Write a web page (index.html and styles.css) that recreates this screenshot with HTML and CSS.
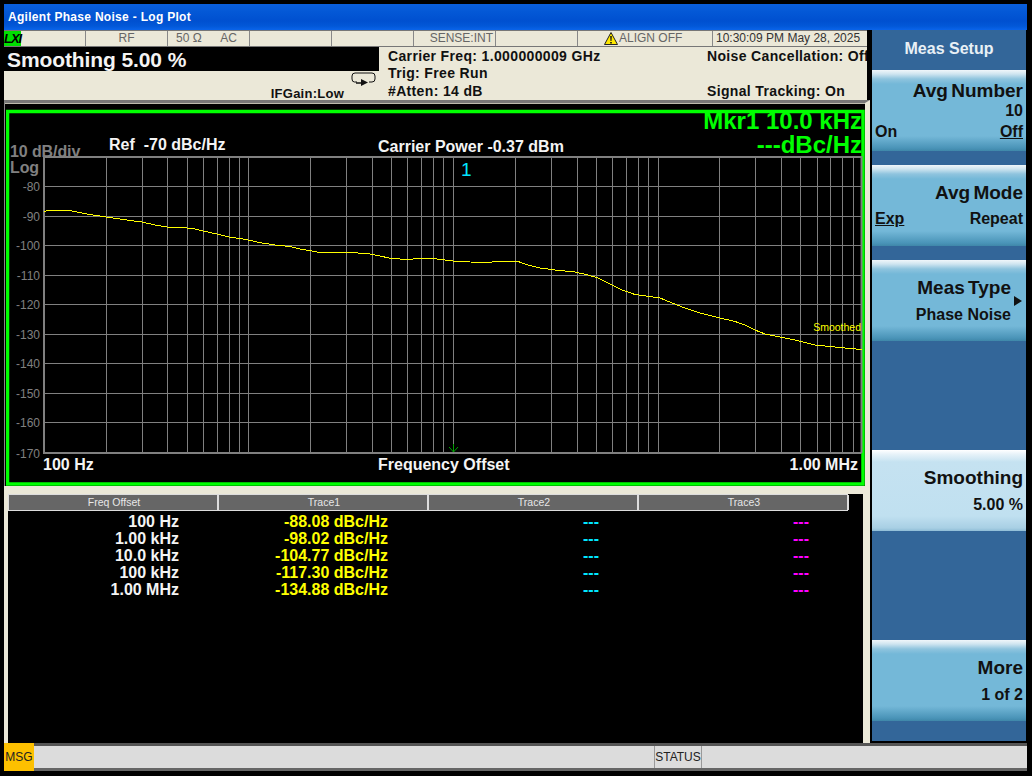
FILE: index.html
```html
<!DOCTYPE html>
<html lang="en">
<head>
<meta charset="utf-8">
<title>Agilent Phase Noise - Log Plot</title>
<link rel="stylesheet" href="styles.css">
</head>
<body>
<div class="window">
  <div class="titlebar">Agilent Phase Noise - Log Plot</div>
  <div class="main">
    <div class="left">
      <div class="statusrow">
        <div class="cell cell-lxi"><span class="lxi">LXI</span></div>
        <div class="cell cell-center">RF</div>
        <div class="cell cell-pair"><span>50 Ω</span><span>AC</span></div>
        <div class="cell"></div>
        <div class="cell"></div>
        <div class="cell cell-sense">SENSE:INT</div>
        <div class="cell"></div>
        <div class="cell cell-align">
          <svg class="warn" width="14" height="13" viewBox="0 0 14 13"><path d="M7 .5 13.500 12.500H.5Z" fill="#ffe800" stroke="#222" stroke-width="1"/><path d="M6.200 4h1.600l-.3 5h-1zM6.200 10h1.600v1.500H6.200z" fill="#111"/></svg>
          <span>ALIGN OFF</span>
        </div>
        <div class="cell cell-time">10:30:09 PM May 28, 2025</div>
      </div>
      <div class="infobar">
        <div class="info-left">
          <div class="active">Smoothing 5.00 %</div>
          <div class="info-under">
            <span class="ifgain">IFGain:Low</span>
            <svg class="loop" width="25" height="15" viewBox="0 0 25 15"><path d="M6 10H3.500Q1 10 1 7V4Q1 1 4 1H21Q24 1 24 4V7Q24 10 21 10H18" fill="none" stroke="#111" stroke-width="1"/><path d="M5 11H11" stroke="#111" stroke-width="1.500" fill="none"/><path d="M10 7 17 10.500 10 14Z" fill="#111"/></svg>
          </div>
        </div>
        <div class="info-mid">
          <div>Carrier Freq: 1.000000009 GHz</div>
          <div>Trig: Free Run</div>
          <div>#Atten: 14 dB</div>
        </div>
        <div class="info-right">
          <div>Noise Cancellation: Off</div>
          <div>Signal Tracking: On</div>
        </div>
      </div>
      <div class="plotpanel">
        <svg class="plot" width="859" height="377" viewBox="6 109 859 377">
          <rect x="7.500" y="111.500" width="855.500" height="372.500" fill="#000" stroke="#00ff00" stroke-width="3.500"/>
          <path class="grid" d="M45 186.500H862M45 216.500H862M45 245.500H862M45 275.500H862M45 304.500H862M45 334.500H862M45 363.500H862M45 393.500H862M45 422.500H862M106.500 157V452M142.500 157V452M167.500 157V452M187.500 157V452M203.500 157V452M217.500 157V452M229.500 157V452M239.500 157V452M248.500 157V452M310.500 157V452M346.500 157V452M372.500 157V452M391.500 157V452M407.500 157V452M421.500 157V452M433.500 157V452M443.500 157V452M453.500 157V452M515.500 157V452M551.500 157V452M577.500 157V452M596.500 157V452M612.500 157V452M626.500 157V452M638.500 157V452M648.500 157V452M658.500 157V452M719.500 157V452M755.500 157V452M781.500 157V452M800.500 157V452M817.500 157V452M830.500 157V452M842.500 157V452M853.500 157V452"/>
          <path class="gridedge" d="M44 157H861.500V453M44 453H861.500M44 156V454"/>
          <path class="trace" d="M44 212 47 210.500H70L74 211.500 90 214.500 106 217 113 218 130 220.500 142 222 155 225 167 227 178 227 187 228 195 229 203 231 217 234 229 237 240 238.500 248 240 262 243 275 245 290 246.500 300 249 312 251 320 252.500 332 252.500 345 252 370 254 380 256 391 258.500 400 259 407 259.500 420 258.500 433 258.500 445 260 453 261 470 262 488 262.500 500 261 510 261 518 261.500 528 265 540 268 555 270 575 272 588 275 598 278 612 285 622 290 635 294.500 650 296.500 660 298 672 303 685 308 700 313 720 318 735 321.500 745 325 755 330 765 334 780 337 795 340 805 342.500 815 345 830 346.500 845 348 862 349.500"/>
          <path class="mark" d="M449 447 453.500 452 458 447M453.500 444V452"/>
          <text class="dim" x="10" y="157">10 dB/div</text>
          <text class="dim" x="10" y="173">Log</text>
          <g class="axis">
            <text x="40" y="191">-80</text>
            <text x="40" y="221">-90</text>
            <text x="40" y="250">-100</text>
            <text x="40" y="280">-110</text>
            <text x="40" y="309">-120</text>
            <text x="40" y="339">-130</text>
            <text x="40" y="368">-140</text>
            <text x="40" y="398">-150</text>
            <text x="40" y="427">-160</text>
            <text x="40" y="458">-170</text>
          </g>
          <text class="white" x="109" y="150">Ref  -70 dBc/Hz</text>
          <text class="white" x="378" y="152">Carrier Power -0.37 dBm</text>
          <text class="markerno" x="461" y="176">1</text>
          <text class="green" x="862" y="129">Mkr1 10.0 kHz</text>
          <text class="green" x="862" y="153">---dBc/Hz</text>
          <text class="smoothed" x="861" y="331">Smoothed</text>
          <text class="white" x="43" y="470">100 Hz</text>
          <text class="white" x="378" y="470">Frequency Offset</text>
          <text class="white endtext" x="858" y="470">1.00 MHz</text>
        </svg>
      </div>
      <div class="tablepanel">
        <div class="thead">
          <div>Freq Offset</div><div>Trace1</div><div>Trace2</div><div>Trace3</div>
        </div>
        <div class="tbody">
          <div class="col-f">100 Hz</div><div class="col-1">-88.08 dBc/Hz</div><div class="col-2">---</div><div class="col-3">---</div>
          <div class="col-f">1.00 kHz</div><div class="col-1">-98.02 dBc/Hz</div><div class="col-2">---</div><div class="col-3">---</div>
          <div class="col-f">10.0 kHz</div><div class="col-1">-104.77 dBc/Hz</div><div class="col-2">---</div><div class="col-3">---</div>
          <div class="col-f">100 kHz</div><div class="col-1">-117.30 dBc/Hz</div><div class="col-2">---</div><div class="col-3">---</div>
          <div class="col-f">1.00 MHz</div><div class="col-1">-134.88 dBc/Hz</div><div class="col-2">---</div><div class="col-3">---</div>
        </div>
      </div>
    </div>
    <div class="softpanel">
      <div class="softhead">Meas Setup</div>
      <div class="softkeys">
        <div class="key">
          <div class="key-title">Avg Number</div>
          <div class="key-val key-val-near">10</div>
          <div class="key-split key-tight"><span>On</span><u>Off</u></div>
        </div>
        <div class="key">
          <div class="key-title key-title-low">Avg Mode</div>
          <div class="key-split"><u>Exp</u><span>Repeat</span></div>
        </div>
        <div class="key key-arrow">
          <div class="key-title key-title-low">Meas Type</div>
          <div class="key-val">Phase Noise</div>
          <svg class="arrow" width="10" height="12" viewBox="0 0 10 12"><path d="M1 1 9 6 1 11Z" fill="#111"/></svg>
        </div>
        <div class="gapkey"></div>
        <div class="key key-on">
          <div class="key-title key-title-low">Smoothing</div>
          <div class="key-val">5.00 %</div>
        </div>
        <div class="gapkey"></div>
        <div class="key">
          <div class="key-title key-title-low">More</div>
          <div class="key-val">1 of 2</div>
        </div>
      </div>
    </div>
  </div>
  <div class="bottombar">
    <div class="msg">MSG</div>
    <div class="msgtext"></div>
    <div class="status">STATUS</div>
    <div class="statustext"></div>
  </div>
</div>
</body>
</html>
```
FILE: styles.css
```css
* { box-sizing: border-box; }
html, body { margin: 0; padding: 0; background: #000; }
body { width: 1032px; height: 776px; overflow: hidden; font-family: "Liberation Sans", Arial, sans-serif; }
.window { width: 1032px; height: 776px; padding: 4px 5px 5px 4px; display: flex; flex-direction: column; background: #000; }

.titlebar { height: 26px; flex: none; padding: 6px 0 0 4px; color: #fff; font: bold 12px/15px "Liberation Sans", sans-serif; letter-spacing: .3px;
  background: linear-gradient(#0a5fdc 0, #0458d6 30%, #0050d0 65%, #0258d8 85%, #0a64ea 100%); }

.main { flex: 1; display: flex; min-height: 0; }
.left { width: 866px; flex: none; display: flex; flex-direction: column; background: #000; }

.statusrow { height: 16px; flex: none; margin-right: 3px; display: grid; grid-template-columns: repeat(7, 82px) 135px 1fr; background: #ebe8d8; border-top: 1px solid #777; color: #666; font-size: 12px; line-height: 15px; }
.cell { border-right: 1px solid #888; white-space: nowrap; }
.cell:last-child { border-right: 0; }
.cell-center { text-align: center; }
.cell-sense { text-align: right; padding-right: 2px; }
.cell-lxi { display: flex; }
.lxi { width: 17px; background: #00e000; color: #000; font: italic bold 13px/15px "Liberation Sans", sans-serif; text-align: center; letter-spacing: -1px; }
.cell-pair { display: flex; justify-content: space-between; padding: 0 12px 0 8px; }
.cell-align { display: flex; align-items: center; padding-left: 26px; gap: 1px; }
.warn { flex: none; margin-top: -1px; }
.cell-time { padding-left: 3px; color: #333; }

.infobar { height: 54px; flex: none; margin-right: 3px; display: flex; border-top: 1px solid #777; font-weight: bold; font-size: 14px; line-height: 17.500px; letter-spacing: .35px; color: #111; background: #ebe8d8; }
.info-left { width: 375px; flex: none; display: flex; flex-direction: column; letter-spacing: 0; }
.active { height: 24px; background: #000; color: #f4f4f4; font-size: 21px; line-height: 25px; padding-left: 3px; letter-spacing: -.1px; }
.info-under { flex: 1; display: flex; justify-content: flex-end; align-items: flex-end; padding-right: 3px; gap: 7px; }
.ifgain { margin-bottom: -1px; font-size: 13px; line-height: 16px; letter-spacing: .25px; position: relative; top: 1px; }
.loop { margin-bottom: 13px; }
.info-mid { width: 328px; flex: none; padding: .5px 0 0 9px; }
.info-right { flex: 1; display: flex; flex-direction: column; justify-content: space-between; white-space: nowrap; padding-top: .5px; overflow: hidden; }

.plotpanel { height: 386px; flex: none; padding-top: 6px; padding-left: 1px; border-top: 3px solid #777; border-left: 1px solid #888; border-right: 5px solid #ebe8d8; background: #000; overflow: hidden; box-shadow: inset 0 1px 0 #bdbbae; }
.plot { display: block; }
.grid { stroke: #808080; stroke-width: 1; fill: none; }
.gridedge { stroke: #808080; stroke-width: 2; fill: none; }
.trace { stroke: #ffff00; stroke-width: 1; fill: none; shape-rendering: crispEdges; }
.mark { stroke: #00a000; stroke-width: 1; fill: none; }
.dim { fill: #808080; font-weight: bold; font-size: 16px; letter-spacing: -.1px; }
.axis text { fill: #808080; font-size: 12px; text-anchor: end; }
.white { fill: #f4f4f4; font-size: 16px; white-space: pre; font-weight: bold; }
.endtext { text-anchor: end; }
.markerno { fill: #00e6ff; font-size: 19px; }
.green { fill: #00ff00; font-size: 24px; font-weight: bold; text-anchor: end; }
.smoothed { fill: #ffff00; font-size: 10.500px; text-anchor: end; }

.tablepanel { flex: 1; display: flex; flex-direction: column; min-height: 0; background: #000; border-left: 4px solid #ebe8d8; border-right: 7px solid #ebe8d8; border-top: 8px solid #ebe8d8; }
.thead { flex: none; height: 17px; display: grid; grid-template-columns: repeat(4, 210px); width: 840px; background: #666; color: #e8e8e8; font-size: 10.500px; line-height: 15px; text-align: center; border: 1px solid #ddd; border-right: 0; }
.thead div { border-right: 2px solid #ddd; padding-left: 2px; }
.tbody { display: grid; grid-template-columns: repeat(4, 210px); grid-auto-rows: 17px; padding-top: 1.500px; font-weight: bold; font-size: 16px; line-height: 17px; text-align: right; }
.tbody div { padding-right: 39px; }
.tbody .col-1 { padding-right: 40px; }
.col-f { color: #f4f4f4; }
.col-1 { color: #ffff00; }
.col-2 { color: #00e6ff; }
.col-3 { color: #ff00ff; }

.softpanel { flex: 1; display: flex; flex-direction: column; background: #336699; margin-left: 2px; margin-right: 1px; margin-bottom: 2px; }
.softhead { height: 40px; flex: none; color: #e8f0f6; font-weight: bold; font-size: 16px; line-height: 38px; text-align: center; }
.softkeys { display: grid; grid-template-rows: repeat(7, 81px); row-gap: 14px; }
.key { position: relative; display: flex; flex-direction: column; padding: 11px 3px 0 3px; color: #111; font-size: 16px; font-weight: bold; line-height: 17px; text-align: right;
  background: linear-gradient(#f0f6fa 0, #cfe5f0 4px, #8fc4de 9px, #74b8d8 14px, #74b8d8 66px, #4a94b8 78px, #3f87a9 100%); }
.key-title { font-size: 19px; line-height: 20px; word-spacing: -2px; }
.key-title-low { margin-top: 7px; }
.key-val { margin-top: 8px; }
.key-val-near { margin-top: 1px; }
.key-split { display: flex; justify-content: space-between; }
.key-tight { margin-top: 3.500px; }
.key > .key-title-low + .key-split { margin-top: 7px; }
.key-arrow { padding-right: 15px; }
.arrow { position: absolute; right: 3px; top: 35px; }
.key-on { background: linear-gradient(#fff 0, #e8f3f9 4px, #c5e2f1 12px, #c0e0f0 66px, #a8cfe4 78px, #8fbdd6 100%); }

.bottombar { height: 28px; flex: none; display: flex; background: #dcdcdc; border-top: 3px solid #555; border-bottom: 3px solid #666; color: #222; font-size: 12px; line-height: 23px; }
.msg { width: 30px; flex: none; background: #fdc000; text-align: center; margin-top: -3px; margin-bottom: -3px; line-height: 28px; }
.msgtext { width: 620px; flex: none; }
.status { width: 48px; flex: none; border-left: 1px solid #999; border-right: 1px solid #999; text-align: center; }
.statustext { flex: 1; }
```
